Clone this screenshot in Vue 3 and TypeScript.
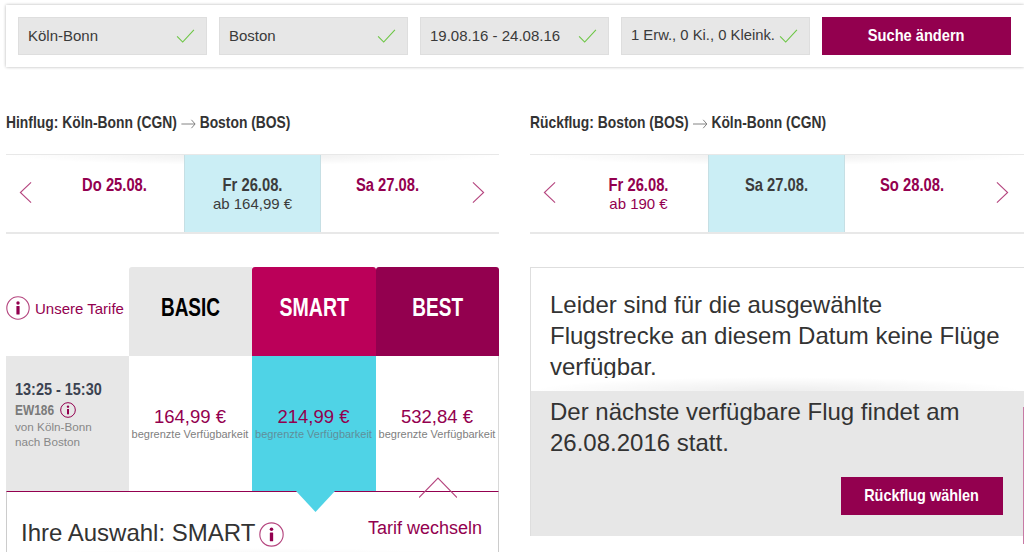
<script setup lang="ts">
interface Day { label: string; sub?: string; active?: boolean }
interface Fare { price: string; selected?: boolean }

const fields: string[] = ['Köln-Bonn', 'Boston', '19.08.16 - 24.08.16', '1 Erw., 0 Ki., 0 Kleink.']
const outDays: Day[] = [
  { label: 'Do 25.08.' },
  { label: 'Fr 26.08.', sub: 'ab 164,99 €', active: true },
  { label: 'Sa 27.08.' },
]
const backDays: Day[] = [
  { label: 'Fr 26.08.', sub: 'ab 190 €' },
  { label: 'Sa 27.08.', active: true },
  { label: 'So 28.08.' },
]
const fares: Fare[] = [
  { price: '164,99 €' },
  { price: '214,99 €', selected: true },
  { price: '532,84 €' },
]
const strips = [
  { title: ['Hinflug: Köln-Bonn (CGN)', 'Boston (BOS)'], days: outDays },
  { title: ['Rückflug: Boston (BOS)', 'Köln-Bonn (CGN)'], days: backDays },
]
</script>

<template>
  <div class="page">
    <form class="search" @submit.prevent>
      <div v-for="f in fields" :key="f" class="field">
        <span>{{ f }}</span>
        <svg class="check" viewBox="0 0 20 15" width="19" height="14"><path d="M1 8l6 6L19 1" fill="none" stroke="#6cc644" stroke-width="1.2" /></svg>
      </div>
      <button class="primary search-btn"><span class="cond">Suche ändern</span></button>
    </form>

    <div class="columns">
      <section class="col left">
        <h2 class="title">
          <span>{{ strips[0].title[0] }}</span>
          <svg class="arrow" viewBox="0 0 18 10" width="18" height="10"><path d="M0 5h17M12.5 .8L17 5l-4.500 4.200" fill="none" stroke="#777" stroke-width="1" /></svg>
          <span>{{ strips[0].title[1] }}</span>
        </h2>
        <div class="strip">
          <svg class="chev chev-l" viewBox="0 0 14 24" width="13" height="23"><path d="M13 1L1.500 12 13 23" fill="none" stroke="#b5467f" stroke-width="1.2" /></svg>
          <div class="days">
            <div v-for="d in strips[0].days" :key="d.label" class="day" :class="{ active: d.active }">
              <strong class="cond">{{ d.label }}</strong>
              <small v-if="d.sub">{{ d.sub }}</small>
            </div>
          </div>
          <svg class="chev chev-r" viewBox="0 0 14 24" width="13" height="23"><path d="M1 1l11.500 11L1 23" fill="none" stroke="#b5467f" stroke-width="1.2" /></svg>
        </div>

        <div class="tariffs">
          <div class="tariff-info">
            <svg class="info" viewBox="0 0 24 24" width="24" height="24"><circle cx="12" cy="12" r="11.2" fill="none" stroke="#b5467f" stroke-width="1.1" /><circle cx="12" cy="7" r="1.7" fill="#93004f" /><rect x="10.400" y="10" width="3.2" height="8.5" rx=".6" fill="#93004f" /></svg>
            <span>Unsere Tarife</span>
          </div>
          <div class="th basic"><span class="cond">BASIC</span></div>
          <div class="th smart"><span class="cond">SMART</span></div>
          <div class="th best"><span class="cond">BEST</span></div>

          <div class="flight">
            <b>13:25 - 15:30</b>
            <div class="num">
              <span>EW186</span>
              <svg viewBox="0 0 24 24" width="16" height="16"><circle cx="12" cy="12" r="11" fill="none" stroke="#93004f" stroke-width="1.5" /><circle cx="12" cy="7" r="1.8" fill="#93004f" /><rect x="10.500" y="10.500" width="3" height="8" fill="#93004f" /></svg>
            </div>
            <div class="route">von Köln-Bonn<br />nach Boston</div>
          </div>
          <div v-for="fare in fares" :key="fare.price" class="fare" :class="{ selected: fare.selected }">
            <span class="price">{{ fare.price }}</span>
            <span class="avail">begrenzte Verfügbarkeit</span>
          </div>
        </div>

        <div class="choice">
          <svg class="pointer" viewBox="0 0 40 20" width="39" height="21" preserveAspectRatio="none"><path d="M0 0h40L20 20z" fill="#4fd3e6" /></svg>
          <svg class="caret" viewBox="0 0 38 21" width="38" height="21"><path d="M0 20.500L19 1l19 19.500" fill="none" stroke="#b5467f" stroke-width="1.1" /></svg>
          <div class="choice-name">
            <span>Ihre Auswahl: SMART</span>
            <svg viewBox="0 0 24 24" width="25" height="25"><circle cx="12" cy="12" r="11.2" fill="none" stroke="#b5467f" stroke-width="1.1" /><circle cx="12" cy="7" r="1.7" fill="#93004f" /><rect x="10.400" y="10" width="3.2" height="8.5" rx=".6" fill="#93004f" /></svg>
          </div>
          <a class="switch">Tarif wechseln</a>
        </div>
      </section>

      <section class="col right">
        <h2 class="title">
          <span>{{ strips[1].title[0] }}</span>
          <svg class="arrow" viewBox="0 0 18 10" width="18" height="10"><path d="M0 5h17M12.500 .8L17 5l-4.500 4.200" fill="none" stroke="#777" stroke-width="1" /></svg>
          <span>{{ strips[1].title[1] }}</span>
        </h2>
        <div class="strip">
          <svg class="chev chev-l" viewBox="0 0 14 24" width="13" height="23"><path d="M13 1L1.500 12 13 23" fill="none" stroke="#b5467f" stroke-width="1.2" /></svg>
          <div class="days">
            <div v-for="d in strips[1].days" :key="d.label" class="day" :class="{ active: d.active }">
              <strong class="cond">{{ d.label }}</strong>
              <small v-if="d.sub">{{ d.sub }}</small>
            </div>
          </div>
          <svg class="chev chev-r" viewBox="0 0 14 24" width="13" height="23"><path d="M1 1l11.500 11L1 23" fill="none" stroke="#b5467f" stroke-width="1.2" /></svg>
        </div>

        <div class="notice">
          <p class="msg">Leider sind für die ausgewählte Flugstrecke an diesem Datum keine Flüge verfügbar.</p>
          <div class="next">
            <p>Der nächste verfügbare Flug findet am 26.08.2016 statt.</p>
            <button class="primary next-btn"><span class="cond">Rückflug wählen</span></button>
          </div>
        </div>
      </section>
    </div>
  </div>
</template>

<style>
html, body { margin: 0; background: #fff; overflow: hidden; }
</style>

<style scoped>
.page {
  width: 1024px;
  height: 552px;
  overflow: hidden;
  position: relative;
  font-family: "Liberation Sans", Arial, sans-serif;
  color: #333;
}
.cond {
  display: inline-block;
  font-weight: 700;
  transform: scaleX(.82);
  white-space: nowrap;
}
.search {
  box-sizing: border-box;
  height: 62px;
  margin: 5px 0 0 6px;
  width: 1018px;
  padding: 12px;
  display: grid;
  grid-template-columns: repeat(5, 189px);
  column-gap: 12px;
  background: #fff;
  box-shadow: 0 0 3px rgba(0, 0, 0, .3);
}
.field {
  box-sizing: border-box;
  height: 38px;
  background: #e7e7e7;
  border: 1px solid #dedede;
  display: flex;
  align-items: center;
  justify-content: space-between;
  padding: 0 11px 0 9px;
  font-size: 15px;
  color: #3a3a3a;
  white-space: nowrap;
}
.field span { margin-bottom: 2px; }
.field:nth-child(4) { font-size: 14.8px; }
.check { flex: none; }
.primary {
  border: 0;
  background: #93004f;
  color: #fff;
  font-family: "Liberation Sans", sans-serif;
  padding: 0;
}
.search-btn { height: 38px; font-size: 17px; }
.search-btn .cond { transform: scaleX(.86); }
.columns {
  display: grid;
  grid-template-columns: 493px 494px;
  column-gap: 31px;
  margin-left: 6px;
}
.title {
  display: flex;
  align-items: center;
  margin: 46px 0 0;
  width: 600px;
  height: 20px;
  line-height: 20px;
  font-size: 17px;
  font-weight: 700;
  color: #333;
  white-space: nowrap;
  transform: scaleX(.815);
  transform-origin: 0 50%;
}
.arrow { margin: 1px 5px 0; flex: none; }
.strip {
  box-sizing: border-box;
  margin-top: 21px;
  height: 80px;
  border-top: 1px solid #e8e8e8;
  border-bottom: 2px solid #e8e8e8;
  display: grid;
  grid-template-columns: 39px 410px 44px;
  align-items: center;
  position: relative;
}
.strip::before {
  content: "";
  position: absolute;
  left: 0;
  right: 0;
  top: 0;
  height: 10px;
  background: radial-gradient(ellipse 50% 100% at 50% 0, rgba(0, 0, 0, .07), rgba(0, 0, 0, 0) 100%);
  pointer-events: none;
}
.chev { margin-bottom: 2px; }
.chev-l { margin-left: 13px; }
.chev-r { margin-left: 17px; }
.days {
  display: grid;
  grid-template-columns: 139px 137px 134px;
  align-self: stretch;
}
.day {
  text-align: center;
  color: #93004f;
  padding-top: 20px;
  position: relative;
}
.day strong {
  font-size: 18px;
  line-height: 20px;
}
.day small { display: block; font-size: 15px; line-height: 20px; margin-top: -1px; }
.day.active {
  background: #cbeef5;
  color: #3c3c3c;
  box-shadow: inset 1px 0 0 #c6dfe4, inset -1px 0 0 #c6dfe4;
}
.tariffs {
  margin-top: 33px;
  display: grid;
  grid-template-columns: 123px 123px 124px 123px;
  grid-template-rows: 89px 135px;
}
.tariff-info {
  display: flex;
  align-items: center;
  gap: 5px;
  color: #93004f;
  font-size: 15px;
  white-space: nowrap;
  padding-bottom: 7px;
  box-sizing: border-box;
}
.th {
  display: flex;
  align-items: center;
  justify-content: center;
  font-weight: 700;
  font-size: 26px;
  padding-bottom: 8px;
  box-sizing: border-box;
}
.th .cond { transform: scaleX(.73); }
.smart .cond { transform: scaleX(.75); }
.basic { background: #e7e7e7; color: #000; border-radius: 3px 0 0 0; }
.smart { background: #bb0059; color: #fff; border-radius: 3px 3px 0 0; }
.best { background: #93004f; color: #fff; border-radius: 3px 3px 0 0; }
.flight {
  background: #e7e7e7;
  padding: 24px 9px 0;
  color: #888;
  font-size: 11.7px;
}
.flight b {
  display: block;
  font-size: 17px;
  line-height: 20px;
  color: #3b4250;
  white-space: nowrap;
  transform: scaleX(.85);
  transform-origin: 0 50%;
}
.num { display: flex; align-items: center; line-height: 20px; }
.num span {
  width: 45px;
  font-weight: 700;
  font-size: 14px;
  color: #7a7a7a;
  transform: scaleX(.85);
  transform-origin: 0 50%;
}
.route { line-height: 15px; margin-top: -1px; }
.fare {
  display: flex;
  flex-direction: column;
  align-items: center;
  padding-top: 51px;
  box-sizing: border-box;
  border-right: 1px solid transparent;
}
.fare:last-child { border-right-color: #d8d8d8; }
.fare.selected { background: #4fd3e6; }
.price { font-size: 18.5px; line-height: 20px; color: #93004f; }
.avail { font-size: 11px; line-height: 14px; color: #808080; white-space: nowrap; }
.fare.selected .avail { color: #5f8f9b; }
.choice {
  box-sizing: border-box;
  height: 80px;
  border-top: 1px solid #93004f;
  border-left: 1px solid #ccc;
  border-right: 1px solid #ccc;
  position: relative;
  display: flex;
  justify-content: space-between;
  padding: 26px 16px 0 14px;
  background: #fff;
}
.choice::after {
  content: "";
  position: absolute;
  left: 0;
  right: 0;
  top: 56px;
  height: 10px;
  background: radial-gradient(ellipse 50% 100% at 50% 100%, rgba(0, 0, 0, .05), rgba(0, 0, 0, 0) 100%);
}
.pointer { position: absolute; left: 289px; top: -1px; }
.caret { position: absolute; left: 412px; top: -15px; }
.choice-name {
  display: flex;
  align-items: center;
  gap: 4px;
  font-size: 24px;
  line-height: 30px;
  height: 30px;
  color: #333;
}
.choice-name svg { margin-top: 3px; }
.switch { color: #93004f; font-size: 18px; line-height: 20px; }
.notice {
  box-sizing: border-box;
  margin-top: 33px;
  height: 269px;
  border: 1px solid #dedede;
  border-right: 0;
  background: #fff;
  display: flex;
  flex-direction: column;
}
.msg {
  margin: 0;
  height: 123px;
  box-sizing: border-box;
  padding: 21px 20px 0 19px;
  font-size: 24px;
  line-height: 31px;
  overflow: hidden;
  flex: none;
  clip-path: inset(0 0 13px 0);
}
.next {
  flex: none;
  background: #e7e7e7;
  position: relative;
  padding: 5px 20px 0 19px;
  height: 145px;
  box-sizing: border-box;
}
.next::before {
  content: "";
  position: absolute;
  left: 0;
  right: 0;
  top: -14px;
  height: 14px;
  background: radial-gradient(ellipse 50% 100% at 50% 100%, rgba(0, 0, 0, .07), rgba(0, 0, 0, 0) 100%);
}
.next::after {
  content: "";
  position: absolute;
  right: 0;
  top: 16px;
  width: 1px;
  height: 137px;
  background: #c77aa5;
}
.next p { margin: 0; font-size: 24px; line-height: 31px; color: #333; }
.next-btn {
  position: absolute;
  right: 21px;
  top: 86px;
  width: 162px;
  height: 38px;
  font-size: 17px;
}
.next-btn .cond { transform: scaleX(.85); }
</style>
